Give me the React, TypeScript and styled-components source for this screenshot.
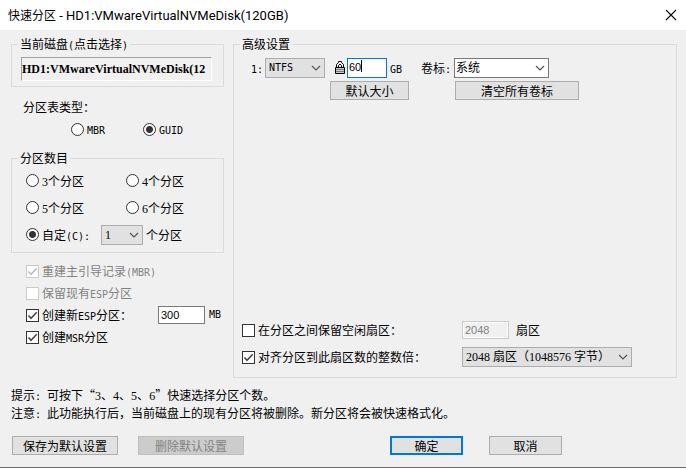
import React, { ReactNode } from "react";
import styled, { createGlobalStyle, css } from "styled-components";

const GlobalStyle = createGlobalStyle`
  *, *::before, *::after { box-sizing: border-box; }
  body {
    margin: 0;
    background: #f0f0f0;
    color: #000;
    font: 12px/16px "Noto Sans CJK SC", sans-serif;
  }
  button, input, select { font: inherit; color: inherit; margin: 0; }
`;

const Dialog = styled.main`
  display: flex;
  flex-direction: column;
  min-height: 100vh;
  border-bottom: 1px solid #696969;
`;

const TitleBar = styled.header`
  display: flex;
  align-items: center;
  justify-content: space-between;
  height: 30px;
  padding: 0 9px 0 8px;
  background: #fff;
`;

const Title = styled.h1`
  margin: 0;
  font-size: 12px;
  font-weight: 400;
  line-height: 16px;
`;

const DiskName = styled.span`
  font: 13px/12px Roboto, sans-serif;
`;

const CloseButton = styled.button`
  display: flex;
  padding: 0;
  border: 0;
  background: none;
`;

const Panels = styled.div`
  display: grid;
  grid-template-columns: 213px 1fr;
  gap: 9px;
  padding: 6px 9px 0 11px;
`;

const Group = styled.fieldset`
  min-width: 0;
  margin: 0;
  padding: 0;
  border: 1px solid #dcdcdc;
`;

const Legend = styled.legend`
  height: 16px;
  margin-left: 6px;
  padding: 0 2px;
  line-height: 16px;
`;

const Mono = styled.span`
  font: 10px/10px "DejaVu Sans Mono", monospace;
`;

const Digits = styled.span`
  font: 12px/12px "Liberation Serif", serif;
`;

const DiskButton = styled.button`
  display: block;
  width: 191px;
  height: 24px;
  margin: 5px 9px;
  padding: 0;
  overflow: hidden;
  border: 1px solid #fff;
  border-top-color: #a0a0a0;
  border-left-color: #a0a0a0;
  background: #f0f0f0;
  font: 700 12px/22px "Liberation Serif", serif;
  text-align: left;
  white-space: nowrap;
`;

const SectionLabel = styled.div`
  margin: 10px 0 2px 12px;
  line-height: 20px;
`;

const TypeChoices = styled.div`
  display: grid;
  grid-template-columns: 72px 1fr;
  height: 20px;
  margin: 0 0 11px 60px;
`;

const CountChoices = styled.div`
  display: grid;
  grid-template-columns: 100px 1fr;
  grid-auto-rows: 27px;
  padding: 1px 0 4px 14px;
`;

const CustomCount = styled.div`
  display: flex;
  grid-column: 1 / -1;
  align-items: center;
`;

const CountSelectBox = styled.div`
  width: 75px;
`;

const Choice = styled.label<{ $off?: boolean }>`
  display: flex;
  align-items: center;
  gap: 3px;
  white-space: nowrap;
  color: ${(p) => (p.$off ? "#838383" : "#000")};
`;

const RadioInput = styled.input`
  appearance: none;
  flex: none;
  width: 13px;
  height: 13px;
  border: 1px solid #333;
  border-radius: 50%;
  background: #fff;
  &:checked {
    background: radial-gradient(circle, #333 3px, #fff 4px);
  }
`;

const TickFrame = styled.span`
  display: grid;
  flex: none;
  width: 13px;
  height: 13px;
  > * { grid-area: 1 / 1; }
  > svg { pointer-events: none; }
`;

const TickInput = styled.input`
  appearance: none;
  width: 13px;
  height: 13px;
  border: 1px solid #333;
  background: #fff;
  &:disabled { border-color: #ccc; }
  & + svg { visibility: hidden; }
  &:checked + svg { visibility: visible; }
`;

const EspOptions = styled.div`
  display: grid;
  grid-auto-rows: 22px;
  margin: 7px 0 0 15px;
`;

const EspSizeRow = styled.div`
  display: grid;
  grid-template-columns: 132px 47px auto;
  align-items: center;
  > :last-child { padding-left: 4px; }
`;

const TextInput = styled.input<{ $active?: boolean }>`
  width: 47px;
  height: 18px;
  padding: 0 2px;
  border: 1px solid #7a7a7a;
  border-radius: 0;
  outline: 0;
  background: #fff;
  font: 11px/14px "Liberation Sans", sans-serif;
  ${(p) =>
    p.$active &&
    css`
      width: 40px;
      height: 20px;
      padding: 0 0 3px 1px;
      border-color: #0078d7;
      caret-color: transparent;
    `}
  &:disabled {
    border-color: #ccc;
    background: #f0f0f0;
    box-shadow: inset 0 0 0 1px #fff;
    color: #838383;
  }
`;

const CaretField = styled.span`
  position: relative;
  display: flex;
`;

const Caret = styled.span`
  position: absolute;
  top: 2px;
  left: 14px;
  width: 1px;
  height: 12px;
  background: #000;
`;

const SelectFrame = styled.span<{ $width: number }>`
  display: grid;
  align-items: center;
  width: ${(p) => p.$width}px;
  height: 20px;
  > * { grid-area: 1 / 1; }
  > svg {
    justify-self: end;
    margin-right: 4px;
    pointer-events: none;
  }
`;

const SelectInput = styled.select<{ $light?: boolean; $mono?: boolean }>`
  appearance: none;
  width: 100%;
  height: 20px;
  padding: 0 16px 0 ${(p) => (p.$light ? 1 : 3)}px;
  border: 1px solid ${(p) => (p.$light ? "#7a7a7a" : "#adadad")};
  border-radius: 0;
  background: ${(p) => (p.$light ? "#fff" : "#e1e1e1")};
  ${(p) =>
    p.$mono
      ? css`font: 10px/16px "DejaVu Sans Mono", monospace;`
      : css`font: 12px/16px "Liberation Serif", "Noto Sans CJK SC", serif;`}
`;

const PushButton = styled.button<{ $width: number; $primary?: boolean }>`
  width: ${(p) => p.$width}px;
  height: 19px;
  padding: 0;
  border: ${(p) => (p.$primary ? "2px solid #0078d7" : "1px solid #adadad")};
  background: #e1e1e1;
  line-height: 15px;
  white-space: nowrap;
  &:disabled {
    border-color: #bfbfbf;
    background: #ccc;
    color: #838383;
  }
`;

const PartitionList = styled.div`
  display: grid;
  grid-template-columns: 14px 65px 91px 33px 125px;
  grid-template-rows: 20px 19px;
  row-gap: 3px;
  align-content: start;
  align-items: center;
  min-height: 269px;
  padding: 6px 0 0 17px;
`;

const SizeCell = styled.div`
  display: flex;
  align-items: center;
  padding-left: 5px;
  > svg { flex: none; }
  > :last-child { margin-left: 3px; }
`;

const SizeButtonCell = styled.div`
  grid-column: 3;
  display: flex;
`;

const LabelButtonCell = styled.div`
  grid-column: 5;
  display: flex;
  padding-left: 1px;
`;

const SectorOptions = styled.div`
  display: grid;
  grid-template-columns: 220px auto;
  grid-template-rows: 18px 20px;
  row-gap: 8px;
  align-items: center;
  padding: 0 0 10px 8px;
`;

const SectorSize = styled.label`
  display: flex;
  align-items: center;
  gap: 7px;
`;

const Hints = styled.div`
  padding: 8px 11px 14px;
  line-height: 18px;
`;

const Hint = styled.p`
  margin: 0;
  white-space: pre-wrap;
`;

const Actions = styled.footer`
  display: flex;
  justify-content: space-between;
  padding: 0 124px 12px 12px;
`;

const ActionPair = styled.div<{ $gap: number }>`
  display: flex;
  gap: ${(p) => p.$gap}px;
`;

function Tick({ children, checked, off }: { children: ReactNode; checked?: boolean; off?: boolean }) {
  return (
    <Choice $off={off}>
      <TickFrame>
        <TickInput type="checkbox" defaultChecked={checked} disabled={off} />
        <svg width="13" height="13" viewBox="0 0 13 13" fill="none">
          <path d="M2.5 6.5 5 9.3 10.7 3.3" stroke={off ? "#bcbcbc" : "#444"} strokeWidth="1.5" />
        </svg>
      </TickFrame>
      <span>{children}</span>
    </Choice>
  );
}

function Radio({ name, checked, children }: { name: string; checked?: boolean; children: ReactNode }) {
  return (
    <Choice>
      <RadioInput type="radio" name={name} defaultChecked={checked} />
      <span>{children}</span>
    </Choice>
  );
}

function DropDown({ value, width, label, id, light, mono }: { value: string; width: number; label?: string; id?: string; light?: boolean; mono?: boolean }) {
  return (
    <SelectFrame $width={width}>
      <SelectInput id={id} aria-label={label} $light={light} $mono={mono} defaultValue={value}>
        <option>{value}</option>
      </SelectInput>
      <svg width="10" height="6" viewBox="0 0 10 6" fill="none">
        <path d="M1 1 5 5 9 1" stroke="#555" strokeWidth="1.2" />
      </svg>
    </SelectFrame>
  );
}

function LockIcon() {
  return (
    <svg width="12" height="14" viewBox="0 0 12 14" fill="none">
      <path d="M1.5 7V3.5L3.5 1.5V.5H6.5V1.5L8.5 3.5V7" stroke="#000" />
      <path d="M3.5 7V4.5L5 3 6.5 4.5V7" stroke="#000" />
      <path d="M.5 6.5H9.5V12.5H.5Z" fill="#ccc" stroke="#000" />
      <path d="M1 8.5H9M1 10.5H9" stroke="#777" />
    </svg>
  );
}

export default function App() {
  return (
    <>
      <GlobalStyle />
      <Dialog lang="zh-CN">
        <TitleBar>
          <Title>快速分区<DiskName> - HD1:VMwareVirtualNVMeDisk(120GB)</DiskName></Title>
          <CloseButton aria-label="关闭">
            <svg width="12" height="12" viewBox="0 0 12 12" fill="none">
              <path d="M1 1 11 11M11 1 1 11" stroke="#000" strokeWidth="1.1" />
            </svg>
          </CloseButton>
        </TitleBar>

        <Panels>
          <div>
            <Group>
              <Legend>当前磁盘<Mono>(</Mono>点击选择<Mono>)</Mono></Legend>
              <DiskButton>HD1:VMwareVirtualNVMeDisk(12</DiskButton>
            </Group>
            <SectionLabel>分区表类型：</SectionLabel>
            <TypeChoices>
              <Radio name="table"><Mono>MBR</Mono></Radio>
              <Radio name="table" checked><Mono>GUID</Mono></Radio>
            </TypeChoices>
            <Group>
              <Legend>分区数目</Legend>
              <CountChoices>
                <Radio name="count"><Digits>3</Digits>个分区</Radio>
                <Radio name="count"><Digits>4</Digits>个分区</Radio>
                <Radio name="count"><Digits>5</Digits>个分区</Radio>
                <Radio name="count"><Digits>6</Digits>个分区</Radio>
                <CustomCount>
                  <CountSelectBox>
                    <Radio name="count" checked>自定<Mono>(C):</Mono></Radio>
                  </CountSelectBox>
                  <Choice>
                    <DropDown value="1" width={42} />
                    <span>个分区</span>
                  </Choice>
                </CustomCount>
              </CountChoices>
            </Group>
            <EspOptions>
              <Tick checked off>重建主引导记录<Mono>(MBR)</Mono></Tick>
              <Tick off>保留现有<Mono>ESP</Mono>分区</Tick>
              <EspSizeRow>
                <Tick checked>创建新<Mono>ESP</Mono>分区：</Tick>
                <TextInput aria-label="ESP分区大小" defaultValue="300" />
                <Mono>MB</Mono>
              </EspSizeRow>
              <Tick checked>创建<Mono>MSR</Mono>分区</Tick>
            </EspOptions>
          </div>

          <Group>
            <Legend>高级设置</Legend>
            <PartitionList>
              <label htmlFor="filesystem"><Mono>1:</Mono></label>
              <DropDown id="filesystem" value="NTFS" width={60} mono />
              <SizeCell>
                <LockIcon />
                <CaretField>
                  <TextInput id="size" aria-label="分区大小" $active defaultValue="60" />
                  <Caret />
                </CaretField>
                <label htmlFor="size"><Mono>GB</Mono></label>
              </SizeCell>
              <label htmlFor="volume">卷标<Mono>:</Mono></label>
              <DropDown id="volume" value="系统" width={95} light />
              <SizeButtonCell><PushButton $width={79}>默认大小</PushButton></SizeButtonCell>
              <LabelButtonCell><PushButton $width={124}>清空所有卷标</PushButton></LabelButtonCell>
            </PartitionList>
            <SectorOptions>
              <Tick>在分区之间保留空闲扇区：</Tick>
              <SectorSize>
                <TextInput defaultValue="2048" disabled />
                <span>扇区</span>
              </SectorSize>
              <Tick checked>对齐分区到此扇区数的整数倍：</Tick>
              <DropDown label="对齐扇区数" value="2048 扇区（1048576 字节）" width={170} />
            </SectorOptions>
          </Group>
        </Panels>

        <Hints>
          <Hint>
            提示<Mono>: </Mono>可按下“<Digits>3</Digits>、<Digits>4</Digits>、<Digits>5</Digits>、<Digits>6</Digits>”快速选择分区个数。
          </Hint>
          <Hint>
            注意<Mono>: </Mono>此功能执行后，当前磁盘上的现有分区将被删除。新分区将会被快速格式化。
          </Hint>
        </Hints>

        <Actions>
          <ActionPair $gap={20}>
            <PushButton $width={106}>保存为默认设置</PushButton>
            <PushButton $width={106} disabled>删除默认设置</PushButton>
          </ActionPair>
          <ActionPair $gap={26}>
            <PushButton $width={73} $primary>确定</PushButton>
            <PushButton $width={73}>取消</PushButton>
          </ActionPair>
        </Actions>
      </Dialog>
    </>
  );
}
